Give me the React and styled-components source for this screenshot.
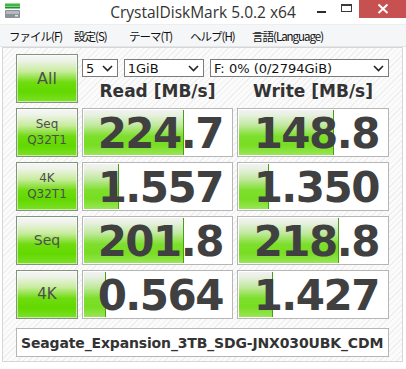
import React from 'react';
import styled, { createGlobalStyle } from 'styled-components';

const Global = createGlobalStyle`
  html, body { margin: 0; padding: 0; background: #ffffff; }
  body { font-family: "DejaVu Sans", Verdana, sans-serif; }
  * { box-sizing: border-box; }
`;

const Window = styled.div`
  width: 406px;
  height: 369px;
  background: #ffffff;
  display: flex;
  flex-direction: column;
  overflow: hidden;
`;

const TitleBar = styled.div`
  height: 24px;
  flex-shrink: 0;
  display: grid;
  grid-template-columns: 1fr auto 1fr;
  align-items: start;
`;

const AppIcon = styled.svg`
  margin: 3px 0 0 4px;
  display: block;
`;

const Title = styled.div`
  font-family: "Open Sans", "Noto Sans", sans-serif;
  font-size: 15.5px;
  color: #333333;
  line-height: 25px;
  white-space: nowrap;
`;

const Controls = styled.div`
  display: flex;
  justify-content: flex-end;
  align-items: flex-start;
`;

const CtrlButton = styled.div`
  width: ${p => p.$w}px;
  height: 18px;
  display: flex;
  align-items: center;
  justify-content: center;
  background: ${p => (p.$close ? '#c75050' : 'transparent')};
`;

const MenuBar = styled.div`
  height: 23px;
  flex-shrink: 0;
  background: #f5f6f7;
  border-top: 1px solid #eceef0;
  border-bottom: 1px solid #e4e6e8;
  display: flex;
  align-items: center;
  padding-left: 9px;
`;

const MenuItem = styled.span`
  font-family: "Noto Sans CJK JP", "Noto Sans", sans-serif;
  font-size: 11.5px;
  letter-spacing: -1px;
  color: #111111;
  width: ${p => p.$w}px;
  flex-shrink: 0;
  white-space: nowrap;
`;

const Client = styled.div`
  margin: 0 3px 7px 2px;
  flex: 1;
  border: 1px solid #d6d6d6;
  background: repeating-linear-gradient(135deg, #fbfbfb 0px, #fbfbfb 3px, #efefef 3px, #efefef 4px);
  padding: 6px 0 0 13px;
  display: flex;
  flex-direction: column;
`;

const TopArea = styled.div`
  display: grid;
  grid-template-columns: 62px 151px 152px;
  grid-template-rows: 23px 26px;
  column-gap: 4px;
`;

const LabelButton = styled.div`
  grid-row: ${p => p.$span || 'auto'};
  height: 49px;
  border: 1px solid #84947c;
  background: linear-gradient(to bottom, #f6f6f6 0%, #eef3ea 12%, #c8ec9c 35%, #6fdc10 58%, #62d800 78%, #7ee028 100%);
  box-shadow: inset 0 0 0 1px rgba(255, 255, 255, 0.55);
  color: #4e4e4e;
  font-size: ${p => p.$size}px;
  line-height: ${p => p.$lh || 1.25};
  display: flex;
  flex-direction: column;
  align-items: center;
  justify-content: center;
  text-align: center;
`;

const SelectRow = styled.div`
  grid-column: 2 / 4;
  align-self: end;
  display: flex;
  gap: 6px;
`;

const Select = styled.div`
  width: ${p => p.$w}px;
  height: 18px;
  border: 1px solid #7c7c7c;
  background: #ffffff;
  display: flex;
  align-items: center;
  justify-content: space-between;
  padding: 0 4px 0 3px;
  font-size: 13px;
  color: #111111;
  white-space: nowrap;
`;

const Header = styled.div`
  display: flex;
  align-items: center;
  justify-content: center;
  font-size: 17px;
  font-weight: bold;
  color: #333333;
  padding-top: 2px;
`;

const Results = styled.div`
  margin-top: 5px;
  display: grid;
  grid-template-columns: 62px 151px 152px;
  grid-auto-rows: 49px;
  column-gap: 4px;
  row-gap: 5px;
`;

const ValueBox = styled.div`
  position: relative;
  border: 1px solid #b6b6b6;
  background: #ffffff;
  display: flex;
  align-items: center;
  justify-content: flex-end;
  padding-right: 9px;
  overflow: hidden;
`;

const Bar = styled.div`
  position: absolute;
  left: 1px;
  top: 1px;
  bottom: 1px;
  border-right: 1px solid #44a010;
  background: linear-gradient(to bottom, #f2f2f2 0%, #e6f0de 12%, #bfe89a 35%, #7ddf2c 58%, #78dd22 78%, #98e656 100%);
`;

const Value = styled.span`
  position: relative;
  font-size: 42px;
  font-weight: bold;
  letter-spacing: -1.5px;
  color: #404040;
  line-height: 1;
  padding-top: 2px;
`;

const DriveBox = styled.div`
  margin-top: 9px;
  width: 373px;
  height: 29px;
  border: 1px solid #b6b6b6;
  background: #ffffff;
  display: flex;
  align-items: center;
  padding-left: 4px;
  font-size: 14px;
  font-weight: bold;
  letter-spacing: -0.15px;
  color: #333333;
  white-space: nowrap;
`;

const Chevron = () => (
  <svg width="11" height="7" viewBox="0 0 11 7">
    <polyline points="1,1 5.5,5.5 10,1" fill="none" stroke="#222" strokeWidth="1.6" />
  </svg>
);

const rows = [
  { label: ['Seq', 'Q32T1'], size: 12, read: '224.7', rw: 100, write: '148.8', ww: 95 },
  { label: ['4K', 'Q32T1'], size: 12, read: '1.557', rw: 35, write: '1.350', ww: 30 },
  { label: ['Seq'], size: 14, read: '201.8', rw: 100, write: '218.8', ww: 100 },
  { label: ['4K'], size: 15, read: '0.564', rw: 22, write: '1.427', ww: 34 },
];

const Meter = ({ value, width }) => (
  <ValueBox>
    <Bar style={{ width: `${width}px` }} />
    <Value>{value}</Value>
  </ValueBox>
);

export default function App() {
  return (
    <>
      <Global />
      <Window>
        <TitleBar>
          <AppIcon width="17" height="16" viewBox="0 0 17 16">
            <rect x="1" y="0.5" width="15" height="2.5" fill="#3cb83c" />
            <rect x="1" y="3.5" width="15" height="2" fill="#1e8e2e" />
            <rect x="1" y="7" width="15" height="8" rx="1" fill="#8a9198" />
            <rect x="2" y="8" width="13" height="3" fill="#b4bac0" />
            <rect x="11" y="12" width="3" height="1.5" fill="#e6e6e6" />
          </AppIcon>
          <Title>CrystalDiskMark 5.0.2 x64</Title>
          <Controls>
            <CtrlButton $w={25}>
              <svg width="9" height="14" viewBox="0 0 9 14">
                <rect x="0" y="9" width="9" height="2" fill="#2b2b2b" />
              </svg>
            </CtrlButton>
            <CtrlButton $w={25}>
              <svg width="11" height="14" viewBox="0 0 11 14">
                <rect x="0.5" y="2.5" width="10" height="7" fill="none" stroke="#3a3a3a" strokeWidth="1" />
                <rect x="0.5" y="2.5" width="10" height="1.5" fill="#3a3a3a" />
              </svg>
            </CtrlButton>
            <CtrlButton $w={47} $close>
              <svg width="12" height="14" viewBox="0 0 12 14">
                <path d="M1.5 2.5 L10.5 11 M10.5 2.5 L1.5 11" stroke="#ffffff" strokeWidth="2" />
              </svg>
            </CtrlButton>
          </Controls>
        </TitleBar>
        <MenuBar>
          <MenuItem $w={65}>ファイル(F)</MenuItem>
          <MenuItem $w={55}>設定(S)</MenuItem>
          <MenuItem $w={61}>テーマ(T)</MenuItem>
          <MenuItem $w={62}>ヘルプ(H)</MenuItem>
          <MenuItem $w={92}>言語(Language)</MenuItem>
        </MenuBar>
        <Client>
          <TopArea>
            <LabelButton $span="1 / 3" $size={16}>All</LabelButton>
            <SelectRow>
              <Select $w={36}>5<Chevron /></Select>
              <Select $w={81}>1GiB<Chevron /></Select>
              <Select $w={181}>F: 0% (0/2794GiB)<Chevron /></Select>
            </SelectRow>
            <Header>Read [MB/s]</Header>
            <Header>Write [MB/s]</Header>
          </TopArea>
          <Results>
            {rows.map((r, i) => (
              <React.Fragment key={i}>
                <LabelButton $size={r.size} $lh={1.3}>
                  {r.label.map(l => <span key={l}>{l}</span>)}
                </LabelButton>
                <Meter value={r.read} width={r.rw} />
                <Meter value={r.write} width={r.ww} />
              </React.Fragment>
            ))}
          </Results>
          <DriveBox>Seagate_Expansion_3TB_SDG-JNX030UBK_CDM</DriveBox>
        </Client>
      </Window>
    </>
  );
}
